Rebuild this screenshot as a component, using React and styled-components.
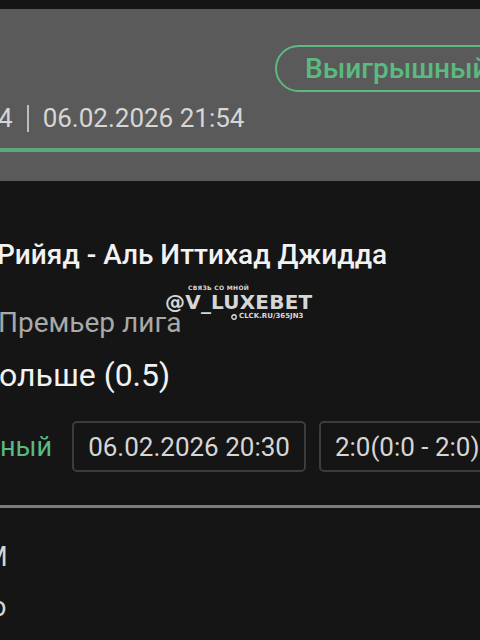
import React from 'react'
import styled, { createGlobalStyle } from 'styled-components'

const colors = {
  page: '#151515',
  panel: '#5a5a5a',
  green: '#5cba80',
  text: '#d6d6d6',
  white: '#f2f2f2',
  muted: '#a9a9a9',
  boxBorder: '#3c3c3c',
}

const GlobalStyle = createGlobalStyle`
  html, body {
    margin: 0;
    padding: 0;
    background: ${colors.page};
    width: 480px;
    height: 640px;
    overflow: hidden;
    font-family: Roboto, "Noto Sans", sans-serif;
  }
`

const Screen = styled.div`
  position: relative;
  width: 480px;
  height: 640px;
  overflow: hidden;
  padding-top: 9px;
  box-sizing: border-box;
`

const Panel = styled.section`
  background: ${colors.panel};
  height: 172px;
  padding-top: 36px;
  box-sizing: border-box;
  display: flex;
  flex-direction: column;
`

const BadgeRow = styled.div`
  display: flex;
  justify-content: flex-end;
  margin-right: -80px;
`

const Badge = styled.div`
  height: 47px;
  box-sizing: border-box;
  border: 2px solid ${colors.green};
  border-radius: 24px;
  padding: 0 28px;
  width: 285px;
  display: flex;
  align-items: center;
  color: ${colors.green};
  font-size: 28px;
  font-weight: 500;
  white-space: nowrap;
`

const MetaRow = styled.div`
  display: flex;
  align-items: center;
  gap: 14px;
  margin-left: -2px;
  margin-top: 8px;
  height: 36px;
  color: ${colors.text};
  font-size: 26px;
`

const Sep = styled.span`
  width: 2px;
  height: 27px;
  background: #bdbdbd;
`

const GreenRule = styled.div`
  height: 4px;
  background: ${colors.green};
  opacity: 0.85;
  margin-top: auto;
  margin-bottom: 29px;
`

const Body = styled.section`
  padding-top: 58px;
  display: flex;
  flex-direction: column;
`

const Line = styled.div`
  font-size: ${(p) => p.$size}px;
  font-weight: ${(p) => p.$weight || 400};
  color: ${(p) => p.$color};
  line-height: 32px;
  margin-top: ${(p) => p.$top || 0}px;
  margin-left: ${(p) => p.$shift || 0}px;
  white-space: nowrap;
`

const InfoRow = styled.div`
  display: flex;
  align-items: center;
  gap: 13px;
  margin-top: 30px;
  white-space: nowrap;
`

const Status = styled.span`
  color: ${colors.green};
  font-size: 27px;
  margin-right: 7px;
`

const InfoBox = styled.div`
  height: 51px;
  box-sizing: border-box;
  border: 2px solid ${colors.boxBorder};
  border-radius: 5px;
  padding: 0 14px;
  display: flex;
  align-items: center;
  color: ${colors.text};
  font-size: 26px;
`

const Divider = styled.div`
  height: 3px;
  background: #7c7c7c;
  margin-top: 33px;
`

const Cut = styled.div`
  font-size: 27px;
  color: ${colors.text};
  line-height: 32px;
  margin-top: ${(p) => p.$top}px;
  margin-left: ${(p) => p.$shift}px;
`

const Watermark = styled.div`
  position: absolute;
  left: 165px;
  top: 285px;
  color: rgba(235, 235, 235, 0.92);
  font-family: "DejaVu Sans", sans-serif;
  font-weight: 700;
  display: flex;
  flex-direction: column;
  line-height: 1;
`

const WmTop = styled.span`
  font-size: 6px;
  margin-left: 23px;
  letter-spacing: 0.3px;
`

const WmMain = styled.span`
  font-size: 20px;
  letter-spacing: 0.2px;
  margin-top: 1px;
`

const WmLink = styled.span`
  font-size: 7px;
  margin-left: 66px;
  margin-top: 1px;
  display: flex;
  align-items: center;
  gap: 2px;
`

export default function App() {
  return (
    <>
      <GlobalStyle />
      <Screen>
        <Panel>
          <BadgeRow>
            <Badge>Выигрышный</Badge>
          </BadgeRow>
          <MetaRow>
            <span>4</span>
            <Sep />
            <span>06.02.2026 21:54</span>
          </MetaRow>
          <GreenRule />
        </Panel>
        <Body>
          <Line $size={28} $weight={500} $color={colors.white} $shift={-3}>
            Рийяд - Аль Иттихад Джидда
          </Line>
          <Line $size={28} $color={colors.muted} $top={36} $shift={-2}>
            Премьер лига
          </Line>
          <Line $size={32} $color={colors.white} $top={20} $shift={-1}>
            ольше (0.5)
          </Line>
          <InfoRow>
            <Status>ный</Status>
            <InfoBox>06.02.2026 20:30</InfoBox>
            <InfoBox>2:0(0:0 - 2:0)</InfoBox>
          </InfoRow>
          <Divider />
          <Cut $top={33} $shift={-16}>М</Cut>
          <Cut $top={18} $shift={-9}>о</Cut>
        </Body>
        <Watermark>
          <WmTop>СВЯЗЬ СО МНОЙ</WmTop>
          <WmMain>@V_LUXEBET</WmMain>
          <WmLink>
            <svg width="6" height="6" viewBox="0 0 6 6">
              <circle cx="3" cy="3" r="2.2" fill="none" stroke="currentColor" strokeWidth="1.4" />
            </svg>
            CLCK.RU/365JN3
          </WmLink>
        </Watermark>
      </Screen>
    </>
  )
}
